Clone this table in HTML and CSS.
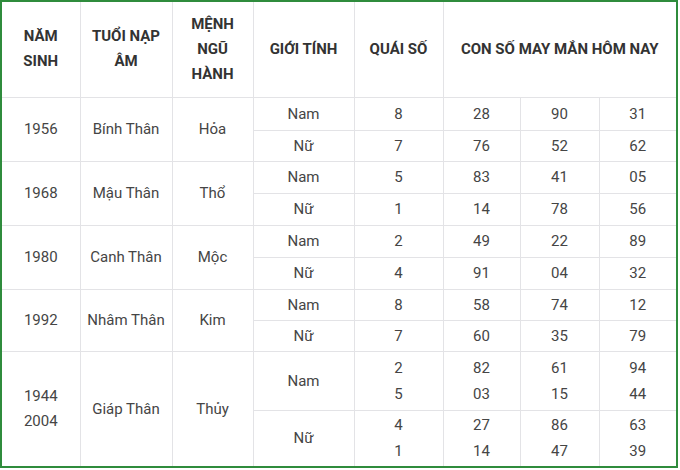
FILE: index.html
```html
<!DOCTYPE html>
<html lang="vi">
<head>
<meta charset="utf-8">
<title>Con số may mắn</title>
<link rel="stylesheet" href="styles.css">
</head>
<body>
<div class="frame">
<table class="lucky">
<colgroup>
<col class="c1"><col class="c2"><col class="c3"><col class="c4"><col class="c5"><col class="c6"><col class="c7"><col class="c8">
</colgroup>
<thead>
<tr class="head">
<th>NĂM<br>SINH</th>
<th>TUỔI NẠP<br>ÂM</th>
<th>MỆNH<br>NGŨ<br>HÀNH</th>
<th>GIỚI TÍNH</th>
<th>QUÁI SỐ</th>
<th colspan="3">CON SỐ MAY MẮN HÔM NAY</th>
</tr>
</thead>
<tbody>
<tr class="r33"><td rowspan="2">1956</td><td rowspan="2">Bính Thân</td><td rowspan="2">Hỏa</td><td>Nam</td><td>8</td><td>28</td><td>90</td><td>31</td></tr>
<tr class="r31"><td>Nữ</td><td>7</td><td>76</td><td>52</td><td>62</td></tr>
<tr class="r32"><td rowspan="2">1968</td><td rowspan="2">Mậu Thân</td><td rowspan="2">Thổ</td><td>Nam</td><td>5</td><td>83</td><td>41</td><td>05</td></tr>
<tr class="r32"><td>Nữ</td><td>1</td><td>14</td><td>78</td><td>56</td></tr>
<tr class="r32"><td rowspan="2">1980</td><td rowspan="2">Canh Thân</td><td rowspan="2">Mộc</td><td>Nam</td><td>2</td><td>49</td><td>22</td><td>89</td></tr>
<tr class="r32"><td>Nữ</td><td>4</td><td>91</td><td>04</td><td>32</td></tr>
<tr class="r31"><td rowspan="2">1992</td><td rowspan="2">Nhâm Thân</td><td rowspan="2">Kim</td><td>Nam</td><td>8</td><td>58</td><td>74</td><td>12</td></tr>
<tr class="r31"><td>Nữ</td><td>7</td><td>60</td><td>35</td><td>79</td></tr>
<tr class="r59 multi"><td rowspan="2" class="years">1944<br>2004</td><td rowspan="2">Giáp Thân</td><td rowspan="2">Thủy</td><td>Nam</td><td>2<br>5</td><td>82<br>03</td><td>61<br>15</td><td>94<br>44</td></tr>
<tr class="r56 multi"><td>Nữ</td><td>4<br>1</td><td>27<br>14</td><td>86<br>47</td><td>63<br>39</td></tr>
</tbody>
</table>
</div>
</body>
</html>
```

FILE: styles.css
```css
html, body {
  margin: 0;
  padding: 0;
  background: #ffffff;
}

body {
  font-family: Roboto, "Liberation Sans", Arial, sans-serif;
  color: #444444;
}

.frame {
  width: 674px;
  border: 2px solid #2f8c3c;
}

.lucky {
  width: 674px;
  border-collapse: collapse;
  border-style: hidden;
  table-layout: fixed;
}

.c1 { width: 78px; }
.c2 { width: 92px; }
.c3 { width: 81px; }
.c4 { width: 101px; }
.c5 { width: 89px; }
.c6 { width: 77px; }
.c7 { width: 79px; }
.c8 { width: 77px; }

.lucky th,
.lucky td {
  border: 1px solid #e3e3e6;
  padding: 0;
  text-align: center;
  vertical-align: middle;
}

.lucky th {
  font-size: 15px;
  font-weight: 700;
  line-height: 25px;
  color: #333333;
}

.lucky td {
  font-size: 15px;
  line-height: 20px;
  color: #454545;
}

.head { height: 95px; }
.r33 { height: 33px; }
.r32 { height: 32px; }
.r31 { height: 31px; }
.r59 { height: 59px; }
.r56 { height: 56px; }

.multi td { line-height: 26px; }
.multi td.years { line-height: 25px; }
```
